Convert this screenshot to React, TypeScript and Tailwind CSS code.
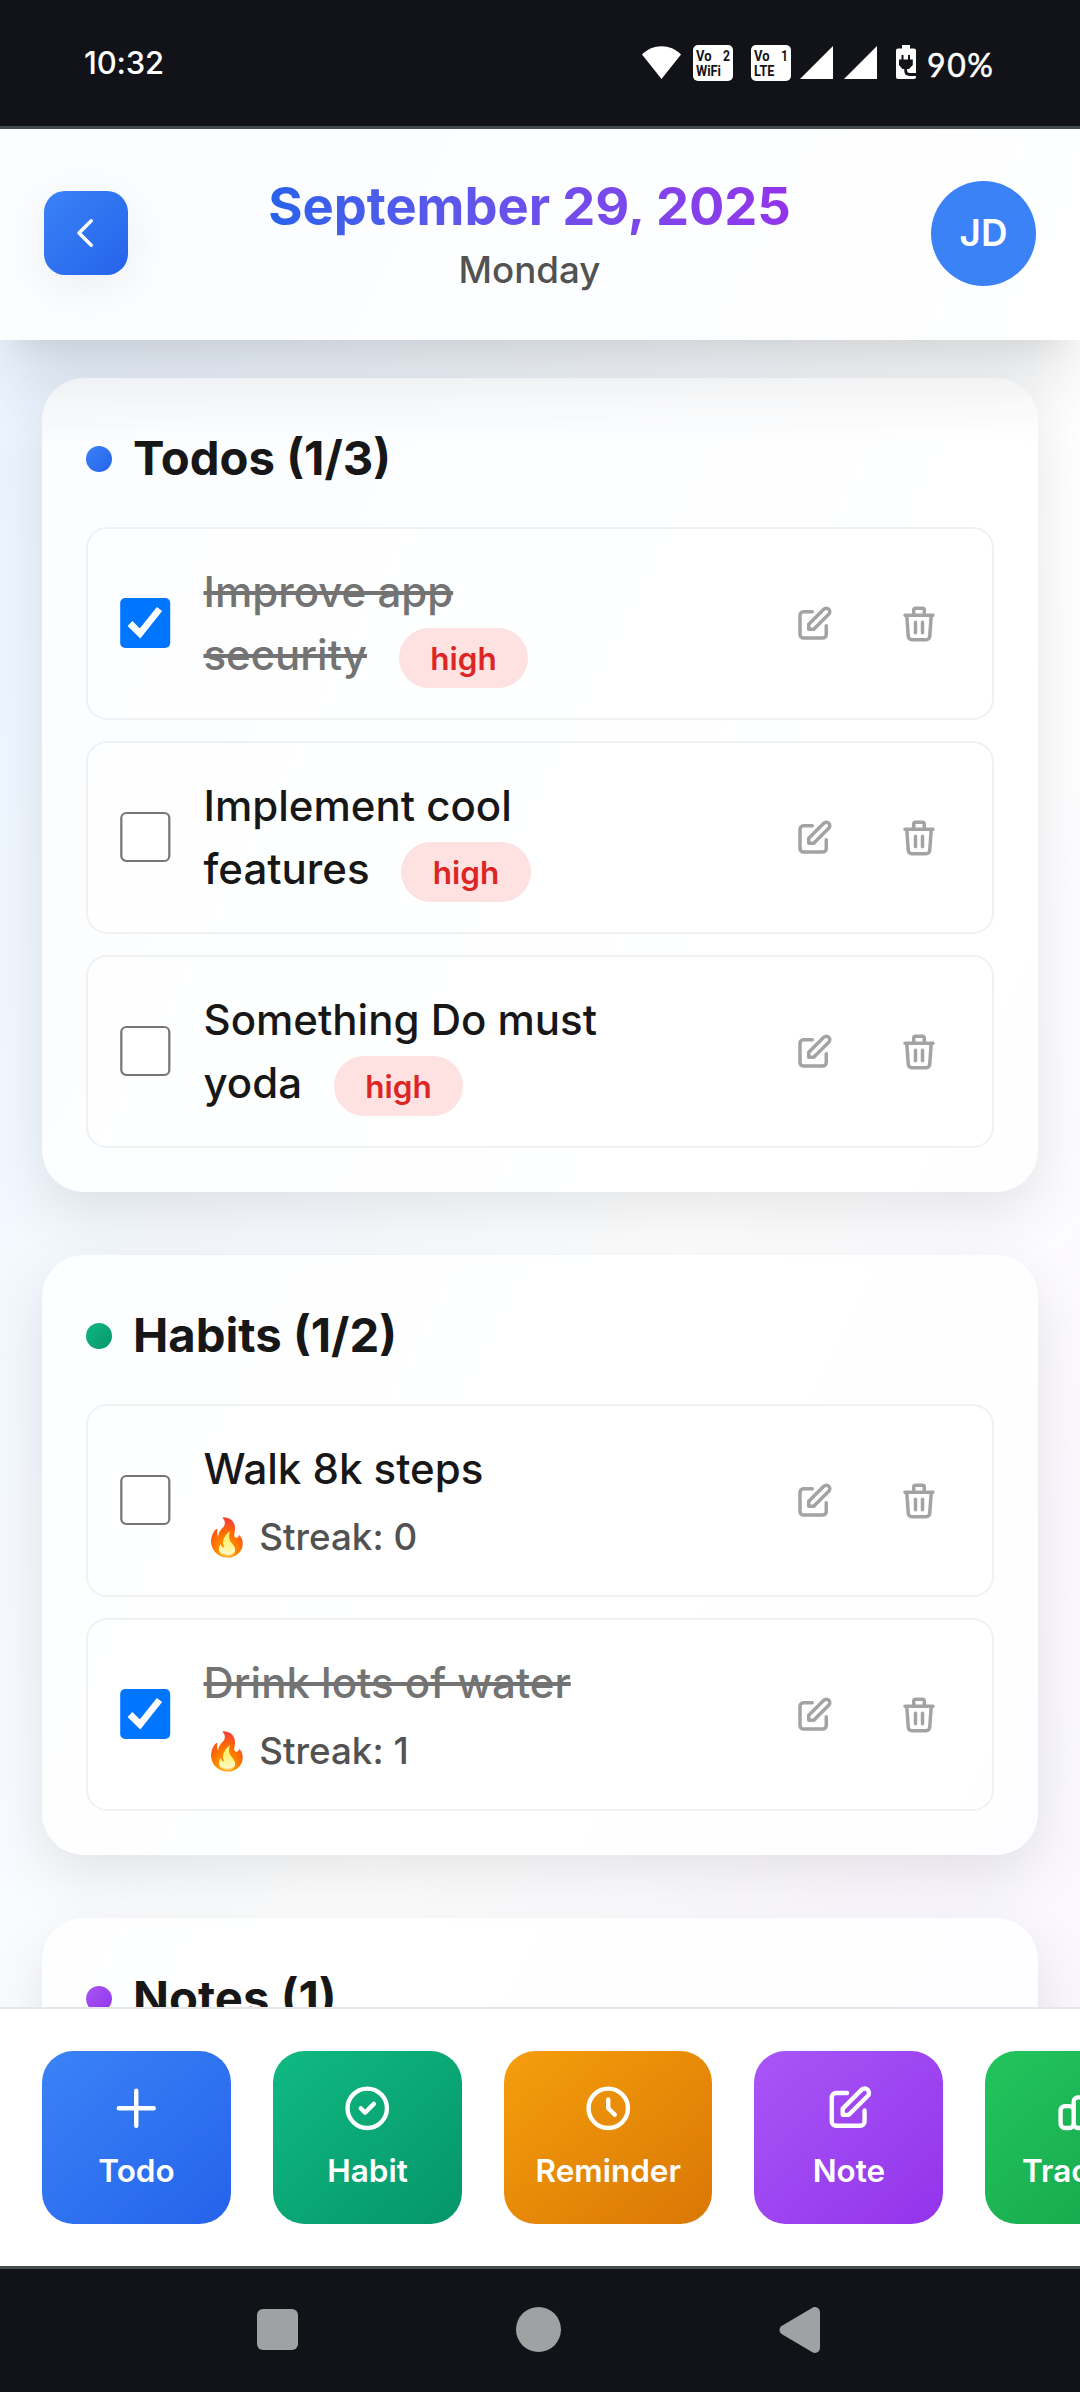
import React from "react";

const PATHS = {
  back: "M15 19l-7-7 7-7",
  plus: "M12 4v16m8-8H4",
  check: "M9 12l2 2 4-4m6 2a9 9 0 11-18 0 9 9 0 0118 0z",
  clock: "M12 8v4l3 3m6-3a9 9 0 11-18 0 9 9 0 0118 0z",
  edit: "M11 5H6a2 2 0 00-2 2v11a2 2 0 002 2h11a2 2 0 002-2v-5m-1.414-9.414a2 2 0 112.828 2.828L11.828 15H9v-2.828l8.586-8.586z",
  trash:
    "M19 7l-.867 12.142A2 2 0 0116.138 21H7.862a2 2 0 01-1.995-1.858L5 7m5 4v6m4-6v6m1-10V4a1 1 0 00-1-1h-4a1 1 0 00-1 1v3M4 7h16",
  chart:
    "M9 19v-6a2 2 0 00-2-2H5a2 2 0 00-2 2v6a2 2 0 002 2h2a2 2 0 002-2zm0 0V9a2 2 0 012-2h2a2 2 0 012 2v10m-6 0a2 2 0 002 2h2a2 2 0 002-2m0 0V5a2 2 0 012-2h2a2 2 0 012 2v14a2 2 0 01-2 2h-2a2 2 0 01-2-2z",
};

function Icon({ name, className }: { name: keyof typeof PATHS; className: string }) {
  return (
    <svg viewBox="0 0 24 24" fill="none" stroke="currentColor" strokeWidth={2} strokeLinecap="round" strokeLinejoin="round" className={className}>
      <path d={PATHS[name]} />
    </svg>
  );
}

function VoBadge({ num, label, width }: { num: string; label: string; width: number }) {
  return (
    <svg width="40" height="36" viewBox="0 0 40 36" fontFamily="Roboto, sans-serif" fontWeight="700" fill="#121318">
      <rect width="40" height="36" rx="5" fill="#fff" />
      <text x="3" y="15.5" fontSize="14.5" textLength="15.5" lengthAdjust="spacingAndGlyphs">Vo</text>
      <text x="30" y="15.5" fontSize="14.5" textLength="7" lengthAdjust="spacingAndGlyphs">{num}</text>
      <text x="3" y="30.5" fontSize="15" textLength={width} lengthAdjust="spacingAndGlyphs">{label}</text>
    </svg>
  );
}

function Signal() {
  return (
    <svg width="33" height="33" viewBox="0 0 33 33" fill="#fff">
      <path d="M33 0V33H0z" />
    </svg>
  );
}

function StatusBar() {
  return (
    <div className="flex h-[129px] shrink-0 items-start justify-between border-b-[3px] border-[#444b4b] bg-[#121318] pt-[45px] pr-[87px] pl-[84px] text-white">
      <span className="text-[31px] leading-[36px] font-medium tracking-[-0.2px]">10:32</span>
      <div className="flex items-start">
        <svg width="39" height="33" viewBox="0 0 39 33" className="mt-px mr-[12px]" fill="#fff">
          <path d="M0 8.5C5.500 3 12 .2 19.500 .2S33.500 3 39 8.500L19.500 33z" />
        </svg>
        <VoBadge num="2" label="WiFi" width={25} />
        <span className="w-[18px]" />
        <VoBadge num="1" label="LTE" width={20.5} />
        <div className="mt-px ml-[9px] flex gap-[11px]">
          <Signal />
          <Signal />
        </div>
        <svg width="20" height="34" viewBox="0 0 20 34" className="mr-[11px] ml-[19px]">
          <path d="M6 0h8v3.500h4a2 2 0 012 2V32a2 2 0 01-2 2H2a2 2 0 01-2-2V5.500a2 2 0 012-2h4z" fill="#fff" />
          <path d="M3 14.500h2.500V10h2v4.500h4.500V10h2v4.500h2.800V20l-3.800 4H6.500L3 20z" fill="#121318" />
          <path d="M9.700 23v3q0 3.500 4 3.500H20" fill="none" stroke="#121318" strokeWidth="2.800" />
        </svg>
        <span className="mt-[2px] w-[66px] font-[Lato] text-[32px] leading-[36px] tracking-[1.6px] whitespace-nowrap [-webkit-text-stroke:0.5px_white]">90%</span>
      </div>
    </div>
  );
}

function Header() {
  return (
    <header className="flex h-[211px] shrink-0 items-center justify-between bg-white/80 px-[44px] pb-[2px] shadow-[0_52px_66px_-13px_rgba(0,0,0,0.12),0_21px_26px_-16px_rgba(0,0,0,0.06)]">
      <button className="mb-[2px] flex size-[84px] items-center justify-center rounded-[21px] bg-linear-to-br from-[#3b82f6] to-[#2563eb] text-white shadow-[0_10px_52px_rgba(0,0,0,0.07)]">
        <Icon name="back" className="size-[42px]" />
      </button>
      <div className="text-center">
        <h1 className="mb-[3px] bg-linear-to-r from-[#2563eb] to-[#9333ea] bg-clip-text text-[52.5px] leading-[70px] font-bold tracking-[-0.08px] text-transparent">
          September 29, 2025
        </h1>
        <p className="text-[36.75px] leading-[52.5px] font-medium text-[#525252]">Monday</p>
      </div>
      <div className="flex size-[105px] items-center justify-center rounded-full bg-[#3b82f6] pb-px text-[36.75px] font-semibold text-white">JD</div>
    </header>
  );
}

function Checkbox({ on }: { on?: boolean }) {
  return (
    <svg width="52.5" height="52.5" viewBox="0 0 52.500 52.500" className="shrink-0" role="checkbox" aria-checked={!!on}>
      {on ? (
        <>
          <rect x=".2" y="1" width="50" height="50" rx="5" fill="#0075ff" />
          <path d="M10 26.500L20 36.500L39.500 12" fill="none" stroke="#fff" strokeWidth="6.800" />
        </>
      ) : (
        <rect x="1.300" y="2" width="48" height="48" rx="5" fill="#fff" stroke="#767676" strokeWidth="2.200" />
      )}
    </svg>
  );
}

function Row({ title, done, priority, streak }: { title: string; done?: boolean; priority?: string; streak?: number }) {
  return (
    <li className="flex h-[193px] items-center rounded-[21px] border-2 border-[#f0f1f2] bg-white/50 px-[31.5px]">
      <Checkbox on={done} />
      <div className={streak === undefined ? "ml-[31.5px] min-w-0 flex-1 pb-[2px]" : "ml-[31.5px] min-w-0 flex-1"}>
        <div className="w-[412px] text-[42px] leading-[63px] font-medium text-[#171717]">
          <span className={done ? "text-[#737373] line-through decoration-4" : ""}>{title}</span>
          {priority && (
            <>
              {" "}
              <span className="ml-[20.5px] rounded-full bg-[#fee2e2] px-[31.5px] py-[10.5px] text-[31.5px] leading-none font-semibold text-[#dc2626]">
                {priority}
              </span>
            </>
          )}
        </div>
        {streak !== undefined && (
          <p className="mt-[11px] text-[36.75px] leading-[52.5px] font-medium text-[#525252]">🔥 Streak: {streak}</p>
        )}
      </div>
      <div className="flex gap-[21px] text-[#a3a3a3]">
        <button className="p-[21px]">
          <Icon name="edit" className="size-[42px]" />
        </button>
        <button className="p-[21px]">
          <Icon name="trash" className="size-[42px]" />
        </button>
      </div>
    </li>
  );
}

function Card({ title, dot, shade = "", children }: { title: string; dot: string; shade?: string; children?: React.ReactNode }) {
  return (
    <section className={`relative shrink-0 rounded-[42px] bg-white/75 p-[44px] shadow-[0_21px_60px_rgba(0,0,0,0.1)] ${shade}`}>
      <h2 className="mb-[33px] flex items-center gap-[21px] text-[47.25px] leading-[72px] font-bold text-[#171717]">
        <span className={`mt-px size-[26px] rounded-full bg-linear-to-br ${dot}`} />
        {title}
      </h2>
      <ul className="flex flex-col gap-[21px]">{children}</ul>
    </section>
  );
}

function Action({ icon, label, colors }: { icon: keyof typeof PATHS; label: string; colors: string }) {
  return (
    <button className={`flex h-[173px] min-w-[189px] shrink-0 flex-col items-center rounded-[31.5px] bg-linear-to-br px-[31.5px] pt-[30.5px] text-white ${colors}`}>
      <Icon name={icon} className="size-[52.5px]" />
      <span className="mt-[16px] text-[31.5px] leading-[42px] font-semibold">{label}</span>
    </button>
  );
}

function NavBar() {
  return (
    <nav className="flex h-[126px] shrink-0 items-start border-t-[3px] border-[#444b4b] bg-[#121318] pt-[38px] pl-[257px]">
      <span className="mt-[2px] size-[41px] rounded-[6px] bg-[#a0a1a3]" />
      <span className="ml-[218px] size-[45px] rounded-full bg-[#a0a1a3]" />
      <svg width="41" height="46" viewBox="0 0 41 46" className="ml-[218px]" fill="#a0a1a3" stroke="#a0a1a3" strokeWidth="10" strokeLinejoin="round">
        <path d="M5.500 23L36 5V41z" />
      </svg>
    </nav>
  );
}

export default function App() {
  return (
    <div className="flex h-[2392px] w-[1080px] flex-col overflow-hidden font-[Inter,sans-serif]">
      <StatusBar />
      <div className="flex h-[2137px] flex-col overflow-hidden bg-linear-to-br from-[#e9f3ff] via-white via-58% to-[#f9f5ff]">
        <Header />
        <main className="flex h-[1667px] shrink-0 flex-col gap-[63px] overflow-hidden px-[42px] pt-[38px]">
          <Card
            title="Todos (1/3)"
            dot="from-[#3b82f6] to-[#2563eb]"
            shade="bg-[linear-gradient(to_bottom,rgba(0,0,0,0.03),transparent_70px)]"
          >
            <Row title="Improve app security" done priority="high" />
            <Row title="Implement cool features" priority="high" />
            <Row title="Something Do must yoda" priority="high" />
          </Card>
          <Card title="Habits (1/2)" dot="from-[#10b981] to-[#059669]">
            <Row title="Walk 8k steps" streak={0} />
            <Row title="Drink lots of water" done streak={1} />
          </Card>
          <Card title="Notes (1)" dot="from-[#a855f7] to-[#9333ea]" />
        </main>
        <div className="flex h-[259px] shrink-0 gap-[42px] overflow-hidden border-t-2 border-[#e5e5ea] bg-white px-[42px] pt-[42px]">
          <Action icon="plus" label="Todo" colors="from-[#3b82f6] to-[#2563eb]" />
          <Action icon="check" label="Habit" colors="from-[#10b981] to-[#059669]" />
          <Action icon="clock" label="Reminder" colors="from-[#f59e0b] to-[#d97706]" />
          <Action icon="edit" label="Note" colors="from-[#a855f7] to-[#9333ea]" />
          <Action icon="chart" label="Tracker" colors="from-[#22c55e] to-[#16a34a]" />
        </div>
      </div>
      <NavBar />
    </div>
  );
}
